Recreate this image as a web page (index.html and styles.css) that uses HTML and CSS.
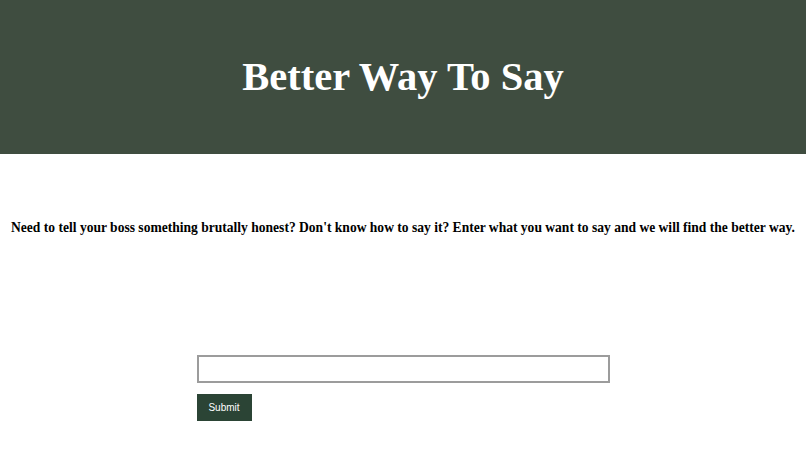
FILE: index.html
```html
<!DOCTYPE html>
<html>
<head>
<meta charset="utf-8">
<link rel="stylesheet" href="styles.css">
</head>
<body>
<header class="hero">
  <h1 class="title">Better Way To Say</h1>
</header>
<main class="content">
  <p class="intro">Need to tell your boss something brutally honest? Don't know how to say it? Enter what you want to say and we will find the better way.</p>
  <form class="form">
    <input class="field" type="text">
    <button class="submit" type="button">Submit</button>
  </form>
</main>
</body>
</html>
```
FILE: styles.css
```css
html, body {
  margin: 0;
  padding: 0;
  background: #ffffff;
}
body {
  font-family: "Liberation Serif", "Times New Roman", serif;
  color: #000;
}
.hero {
  background: #3f4d40;
  height: 154px;
  display: flex;
  align-items: center;
  justify-content: center;
}
.title {
  margin: 0;
  color: #ffffff;
  font-size: 40.5px;
  font-weight: bold;
  line-height: 1;
}
.content {
  display: flex;
  flex-direction: column;
  align-items: center;
}
.intro {
  margin: 64px 0 0;
  font-size: 13.55px;
  font-weight: bold;
  line-height: 20px;
  text-align: center;
  white-space: nowrap;
}
.form {
  margin-top: 117px;
  width: 413px;
  display: flex;
  flex-direction: column;
  align-items: flex-start;
  gap: 11px;
}
.field {
  box-sizing: border-box;
  width: 413px;
  height: 28px;
  margin: 0;
  border: 2px solid #9c9c9c;
  background: #fff;
}
.submit {
  width: 55px;
  height: 27px;
  border: none;
  margin: 0;
  padding: 0;
  background: #2b4435;
  color: #ffffff;
  font-family: "Liberation Sans", Arial, sans-serif;
  font-size: 10px;
}
```
